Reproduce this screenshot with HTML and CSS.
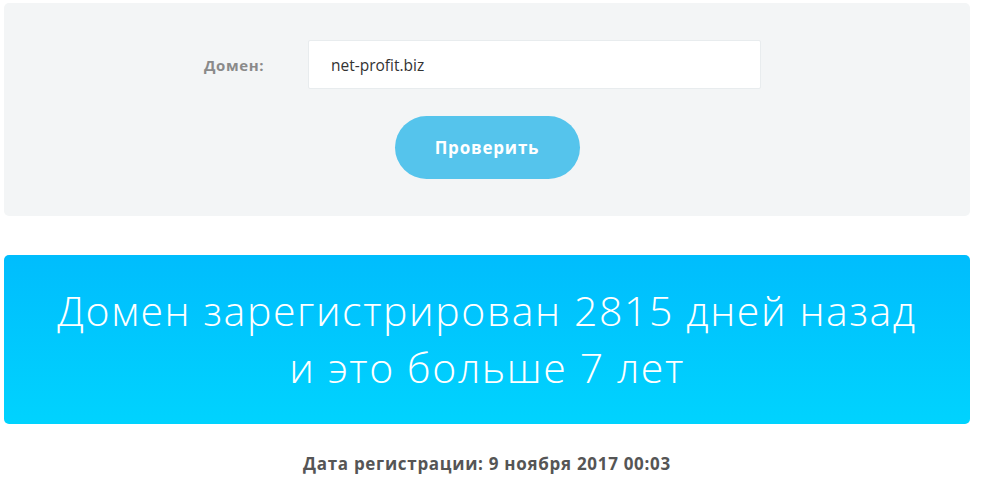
FILE: index.html
```html
<!DOCTYPE html>
<html lang="ru">
<head>
  <meta charset="utf-8">
  <title>Возраст домена</title>
  <link rel="stylesheet" href="styles.css">
</head>
<body>
  <div class="page">
    <form class="check-form" onsubmit="return false">
      <div class="form-row">
        <label class="form-label" for="domain">Домен:</label>
        <input class="form-input" id="domain" type="text" value="net-profit.biz">
      </div>
      <button class="check-btn" type="submit">Проверить</button>
    </form>

    <div class="result">
      Домен зарегистрирован 2815 дней назад<br>
      и это больше 7 лет
    </div>

    <div class="reg-date">Дата регистрации: 9 ноября 2017 00:03</div>
  </div>
</body>
</html>
```

FILE: styles.css
```css
body {
  margin: 0;
  background-color: #ffffff;
  font-family: "Open Sans", "Liberation Sans", sans-serif;
}

.page {
  width: 966px;
  padding: 3px 0 0 4px;
}

.check-form {
  background-color: #f3f5f6;
  border-radius: 5px;
  padding: 37px 0 37px 0;
  display: flex;
  flex-direction: column;
  align-items: center;
}

.form-row {
  display: flex;
  align-items: center;
  align-self: flex-start;
  margin-left: 200px;
}

.form-label {
  width: 104px;
  font-size: 15px;
  font-weight: 700;
  letter-spacing: 0.6px;
  color: #8a8a8a;
}

.form-input {
  width: 453px;
  height: 49px;
  box-sizing: border-box;
  border: 1px solid #e8ecee;
  border-radius: 2px;
  background-color: #ffffff;
  padding: 0 22px;
  font-family: "Open Sans", "Liberation Sans", sans-serif;
  font-size: 15.5px;
  color: #333333;
  outline: none;
}

.check-btn {
  margin-top: 27px;
  width: 185px;
  height: 63px;
  border: none;
  border-radius: 32px;
  background-color: #55c4ec;
  color: #ffffff;
  font-family: "Open Sans", "Liberation Sans", sans-serif;
  font-size: 17px;
  font-weight: 700;
  letter-spacing: 0.8px;
  cursor: pointer;
}

.result {
  margin-top: 39px;
  height: 169px;
  box-sizing: border-box;
  padding-top: 27px;
  border-radius: 5px;
  background: linear-gradient(to bottom, #00bdfd, #00d3fe);
  color: #ffffff;
  text-align: center;
  font-size: 41px;
  font-weight: 300;
  letter-spacing: 1.6px;
  line-height: 57px;
}

.reg-date {
  margin-top: 28px;
  text-align: center;
  font-size: 17px;
  font-weight: 700;
  letter-spacing: 0.7px;
  color: #555555;
}
```
